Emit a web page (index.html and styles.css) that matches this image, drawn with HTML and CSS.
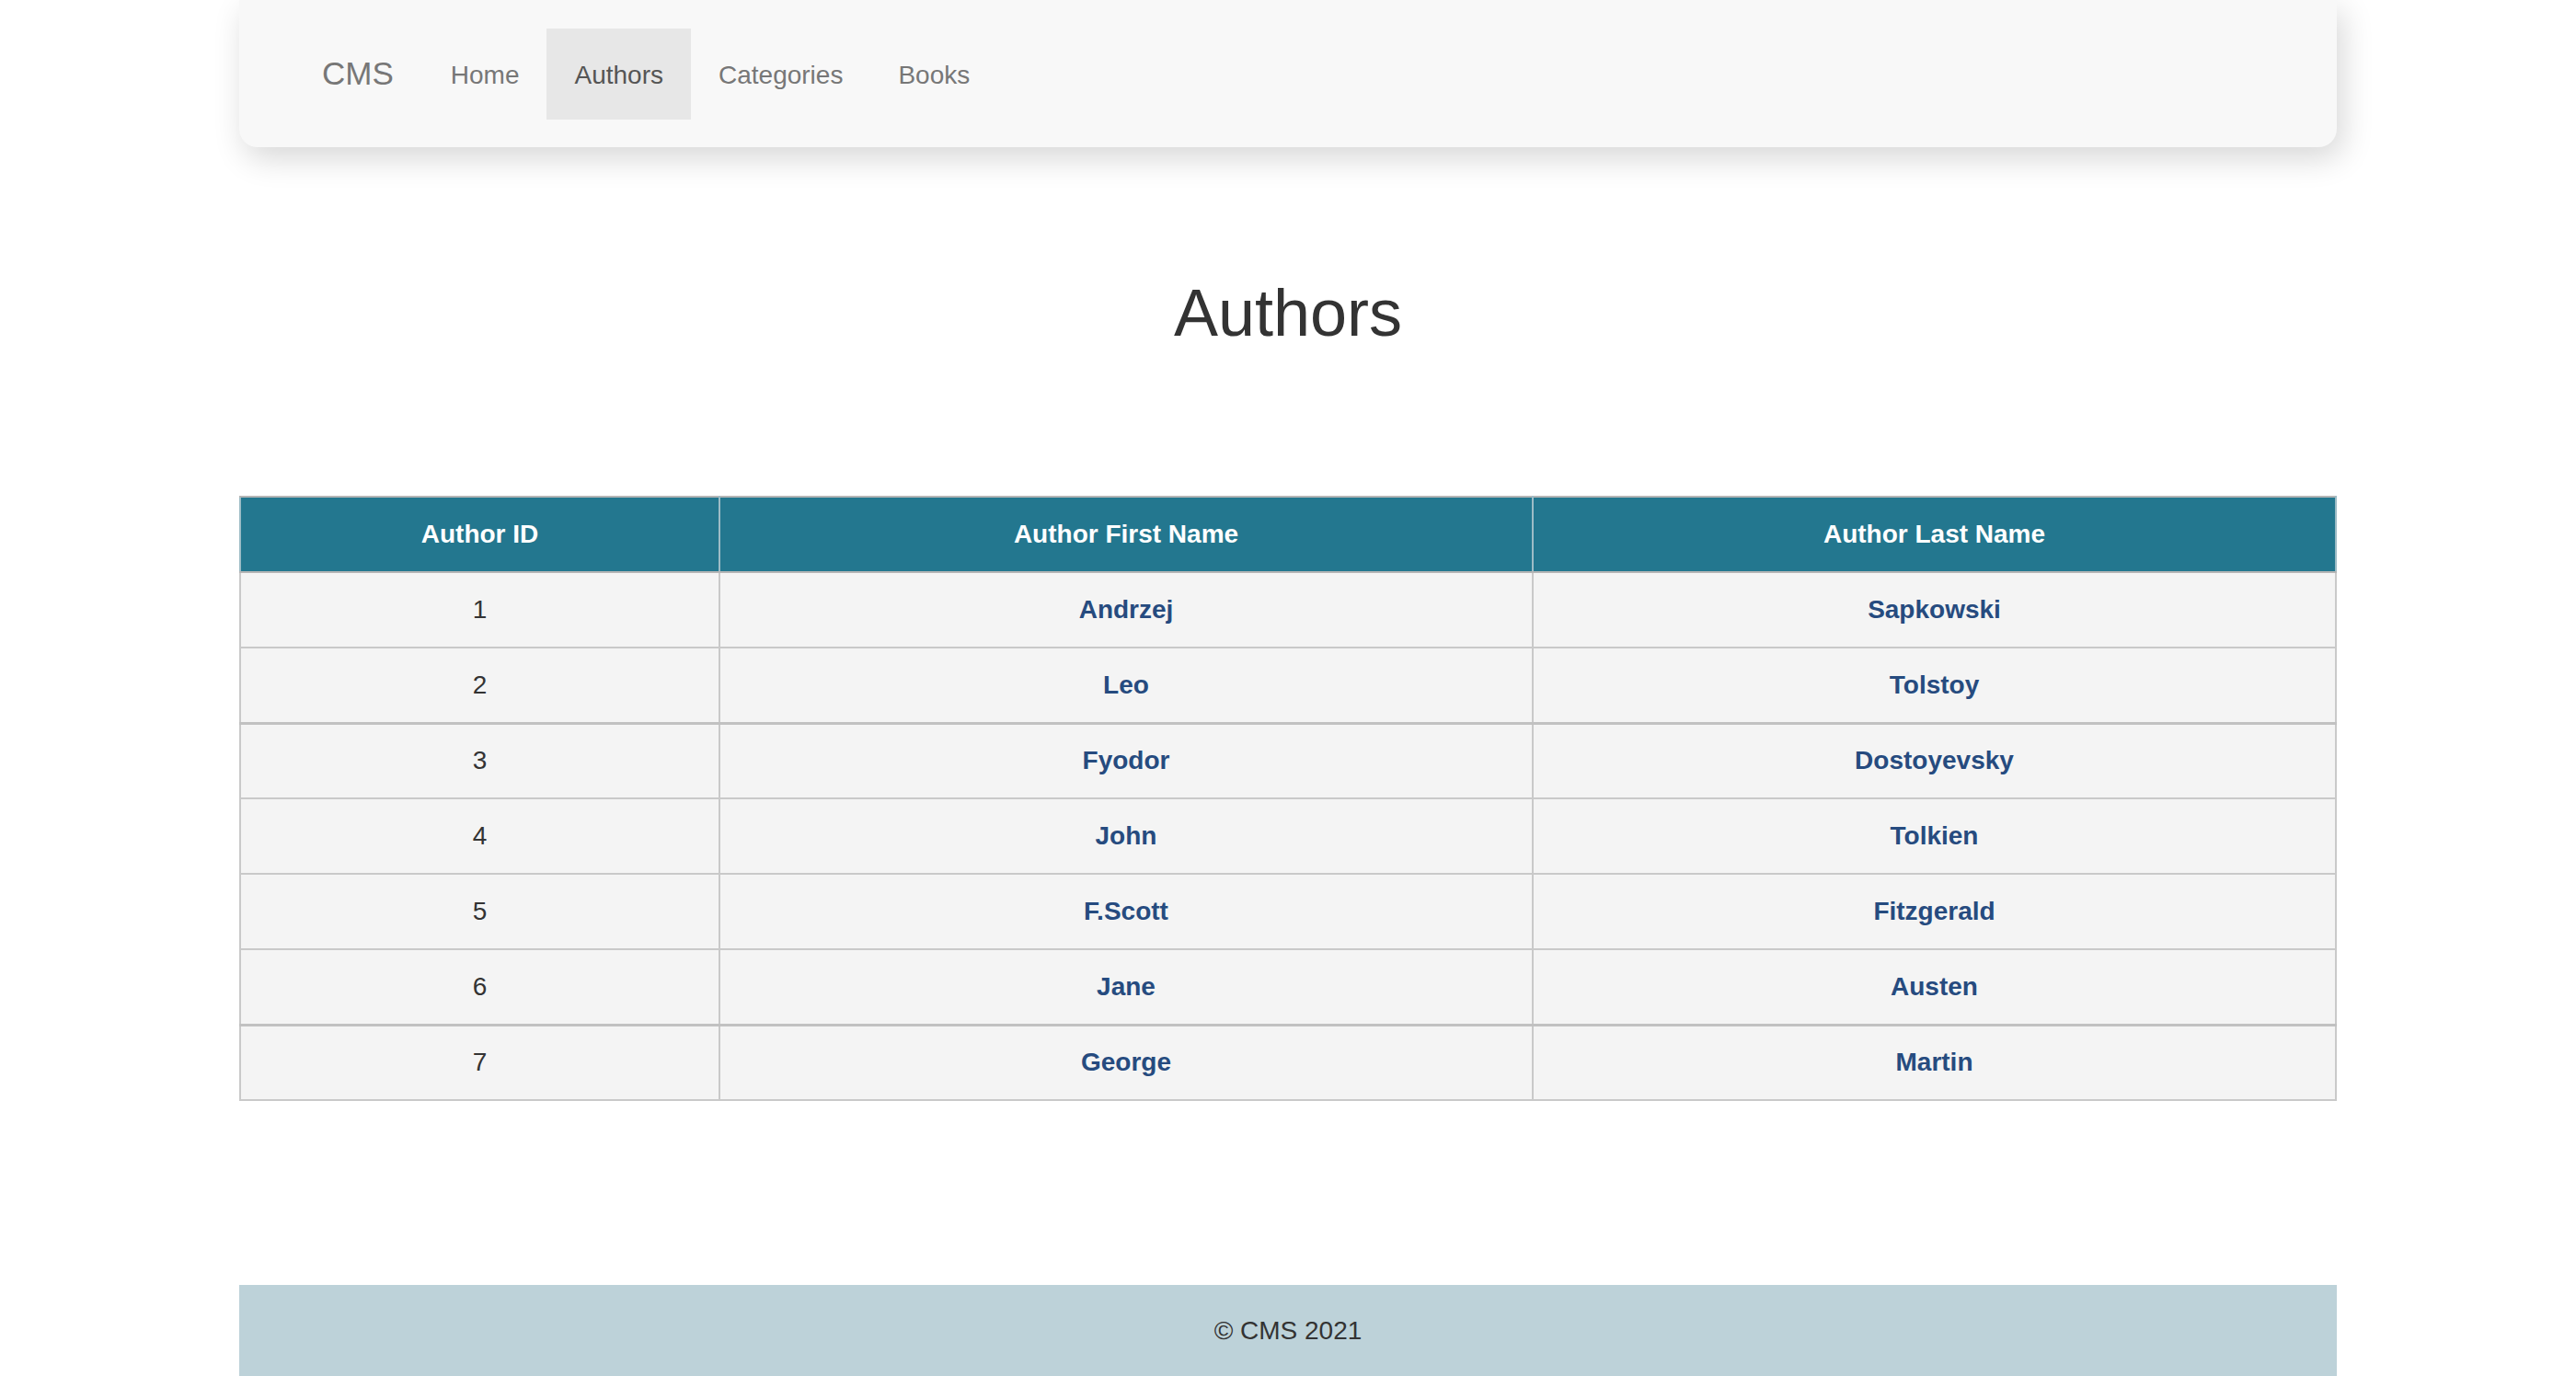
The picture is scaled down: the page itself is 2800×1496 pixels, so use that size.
FILE: index.html
```html
<!DOCTYPE html>
<html lang="en">
<head>
<meta charset="utf-8">
<title>CMS - Authors</title>
<link rel="stylesheet" href="styles.css">
</head>
<body>
<div class="container">
  <nav class="navbar">
    <a class="brand" href="#">CMS</a>
    <ul class="nav">
      <li><a href="#">Home</a></li>
      <li class="active"><a href="#">Authors</a></li>
      <li><a href="#">Categories</a></li>
      <li><a href="#">Books</a></li>
    </ul>
  </nav>

  <h1 class="title">Authors</h1>

  <table class="authors">
    <colgroup>
      <col class="c-id">
      <col class="c-first">
      <col class="c-last">
    </colgroup>
    <thead>
      <tr><th>Author ID</th><th>Author First Name</th><th>Author Last Name</th></tr>
    </thead>
    <tbody>
      <tr><td>1</td><td class="name">Andrzej</td><td class="name">Sapkowski</td></tr>
      <tr><td>2</td><td class="name">Leo</td><td class="name">Tolstoy</td></tr>
      <tr class="thick"><td>3</td><td class="name">Fyodor</td><td class="name">Dostoyevsky</td></tr>
      <tr><td>4</td><td class="name">John</td><td class="name">Tolkien</td></tr>
      <tr><td>5</td><td class="name">F.Scott</td><td class="name">Fitzgerald</td></tr>
      <tr><td>6</td><td class="name">Jane</td><td class="name">Austen</td></tr>
      <tr class="thick"><td>7</td><td class="name">George</td><td class="name">Martin</td></tr>
    </tbody>
  </table>

  <footer class="footer">&copy; CMS 2021</footer>
</div>
</body>
</html>
```
FILE: styles.css
```css
html, body {
  margin: 0;
  padding: 0;
  background: #ffffff;
}

body {
  font-family: "Liberation Sans", Arial, sans-serif;
  color: #333333;
}

.container {
  width: 2280px;
  margin: 0 auto;
  display: flex;
  flex-direction: column;
}

/* Navbar */
.navbar {
  display: flex;
  align-items: center;
  height: 160px;
  padding: 0 60px;
  background: #f8f8f8;
  border-radius: 0 0 20px 20px;
  box-shadow: 6px 12px 34px rgba(0, 0, 0, 0.16);
}

.brand {
  font-size: 35px;
  line-height: 40px;
  color: #777777;
  text-decoration: none;
  padding: 0 32px 0 30px;
}

.nav {
  display: flex;
  list-style: none;
  margin: 0;
  padding: 0;
}

.nav a {
  display: block;
  font-size: 28px;
  line-height: 40px;
  padding: 31px 30px 28px;
  color: #777777;
  text-decoration: none;
}

.nav .active a {
  background: #e7e7e7;
  color: #555555;
}

/* Title */
.title {
  margin: 144px 0 163px;
  font-size: 72px;
  line-height: 72px;
  font-weight: normal;
  text-align: center;
  color: #333333;
}

/* Table */
.authors {
  width: 100%;
  border-collapse: collapse;
  border: 2px solid #b5b5b5;
  font-size: 28px;
  line-height: 32px;
  background: #f4f4f4;
}

.c-id { width: 521px; }
.c-first { width: 884px; }

.authors th,
.authors td {
  border: 2px solid #c9c9c9;
  padding: 24px 10px;
  text-align: center;
}

.authors th {
  background: #23778f;
  color: #ffffff;
  font-weight: bold;
  border-color: #b5b5b5;
  border-left-color: #9dbcc6;
  border-right-color: #9dbcc6;
}

.authors td {
  color: #333333;
}

.authors td.name {
  color: #264b7f;
  font-weight: bold;
}

.authors tr.thick td {
  border-top: 3px solid #c1c1c1;
  padding-top: 23px;
}

/* Footer */
.footer {
  margin-top: 200px;
  background: #bdd2d9;
  padding: 30px 0 30px;
  font-size: 28px;
  line-height: 40px;
  text-align: center;
  color: #333333;
}
```
